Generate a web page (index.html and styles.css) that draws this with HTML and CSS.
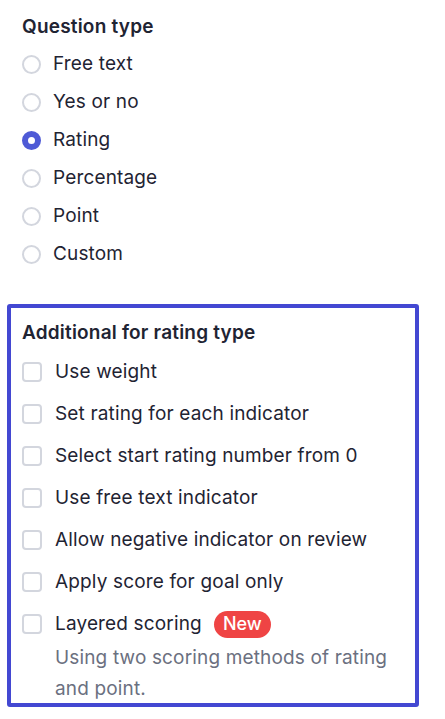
FILE: index.html
```html
<!DOCTYPE html>
<html>
<head>
<meta charset="utf-8">
<link rel="stylesheet" href="styles.css">
</head>
<body>
<div class="page">
  <section class="qtype">
    <h2 class="title">Question type</h2>
    <ul class="radios">
      <li class="radio-row"><span class="radio"></span><span class="label">Free text</span></li>
      <li class="radio-row"><span class="radio"></span><span class="label">Yes or no</span></li>
      <li class="radio-row"><span class="radio checked"></span><span class="label">Rating</span></li>
      <li class="radio-row"><span class="radio"></span><span class="label">Percentage</span></li>
      <li class="radio-row"><span class="radio"></span><span class="label">Point</span></li>
      <li class="radio-row"><span class="radio"></span><span class="label">Custom</span></li>
    </ul>
  </section>
  <section class="extra">
    <h2 class="title">Additional for rating type</h2>
    <ul class="checks">
      <li class="check-row"><span class="check"></span><span class="label">Use weight</span></li>
      <li class="check-row"><span class="check"></span><span class="label">Set rating for each indicator</span></li>
      <li class="check-row"><span class="check"></span><span class="label">Select start rating number from 0</span></li>
      <li class="check-row"><span class="check"></span><span class="label">Use free text indicator</span></li>
      <li class="check-row"><span class="check"></span><span class="label">Allow negative indicator on review</span></li>
      <li class="check-row"><span class="check"></span><span class="label">Apply score for goal only</span></li>
      <li class="check-row top"><span class="check"></span>
        <div class="label-block">
          <div class="label">Layered scoring <span class="badge">New</span></div>
          <p class="desc">Using two scoring methods of rating and point.</p>
        </div>
      </li>
    </ul>
  </section>
</div>
</body>
</html>
```

FILE: styles.css
```css
* { box-sizing: border-box; }
html, body { margin: 0; padding: 0; background: #ffffff; }
body {
  font-family: Inter, "Noto Sans", "Liberation Sans", sans-serif;
  color: #1f2433;
  font-size: 19px;
  letter-spacing: 0.15px;
}
.page { padding: 0 0 0 7px; }
.title {
  margin: 0;
  font-size: 19px;
  font-weight: 600;
  letter-spacing: 0.2px;
  line-height: 28px;
  color: #1f2433;
}
.qtype { padding: 13px 0 0 15px; }
.radios, .checks { list-style: none; margin: 0; padding: 0; }
.radios { margin-top: 4px; }
.radio-row {
  display: flex;
  align-items: center;
  height: 38px;
}
.radio {
  width: 19px;
  height: 19px;
  border-radius: 50%;
  border: 2px solid #d3d6de;
  flex: none;
  margin-right: 12px;
}
.radio.checked { border: 6px solid #4e5ad6; background: #fff; }
.label { line-height: 28px; }
.extra {
  margin-top: 31px;
  width: 412px;
  height: 403px;
  border: 4px solid #4348d2;
  border-radius: 3px;
  padding: 11px 10px 0 11px;
}
.check-row {
  display: flex;
  align-items: center;
  height: 42px;
}
.check-row:first-child { margin-top: 4px; }
.check-row.top { align-items: flex-start; height: auto; }
.check {
  width: 20px;
  height: 20px;
  border: 2px solid #d3d6de;
  border-radius: 4px;
  flex: none;
  margin-right: 13px;
}
.check-row.top .check { margin-top: 11px; }
.label-block .label { line-height: 42px; display: flex; align-items: center; }
.badge {
  display: inline-flex;
  align-items: center;
  height: 27px;
  padding: 0 9px;
  margin-left: 12px;
  border-radius: 14px;
  background: #ef4444;
  color: #fff;
  font-weight: 500;
  font-size: 18px;
  letter-spacing: 0;
}
.desc {
  margin: -3px 0 0;
  color: #6b7080;
  line-height: 31px;
  font-size: 19px;
}
```
